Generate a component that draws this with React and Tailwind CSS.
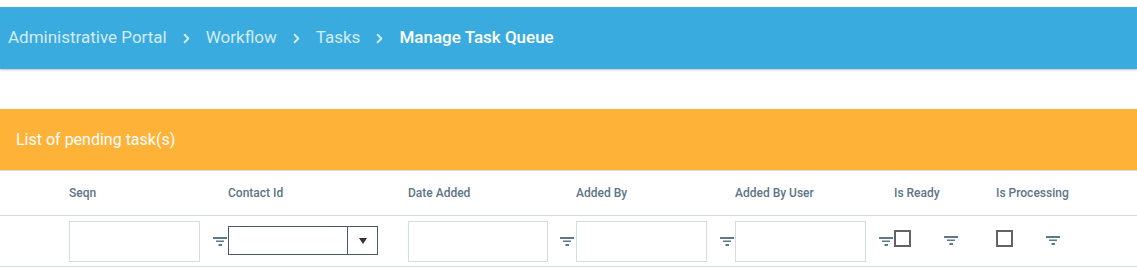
import { ChevronRight } from "lucide-react";

const cols = "grid grid-cols-[69px_159px_180px_168px_159px_159px_102px_1fr]";

function FilterIcon() {
  return (
    <svg width="15" height="9" viewBox="0 0 15 9" className="shrink-0">
      <rect x="0" y="0" width="14" height="2" fill="#5d7a89" />
      <rect x="3" y="3.5" width="8" height="1.5" fill="#5d7a89" />
      <rect x="5.5" y="7" width="3.5" height="2" fill="#5d7a89" />
    </svg>
  );
}

function TextBox({ w }) {
  return <input className={`h-[41px] ${w} border border-[#d3dce1] bg-white outline-none`} />;
}

function Check() {
  return <div className="w-[17px] h-[17px] border-2 border-[#636363] bg-white" />;
}

export default function App() {
  const crumbs = ["Administrative Portal", "Workflow", "Tasks"];
  const heads = ["Seqn", "Contact Id", "Date Added", "Added By", "Added By User", "Is Ready", "Is Processing"];

  return (
    <div className="w-[1137px] h-[268px] bg-white font-['Roboto',sans-serif] overflow-hidden">
      <div className="pt-[7px]">
        <div className="h-[62px] bg-[#3aabdf] flex items-center pl-2 shadow-[0_1px_2px_rgba(0,0,0,0.25)]">
          {crumbs.map((c) => (
            <div key={c} className="flex items-center">
              <span className="text-[17px] text-[#d2ecf8]">{c}</span>
              <ChevronRight size={15} strokeWidth={3} className="mx-[12px] text-[#d2ecf8]" />
            </div>
          ))}
          <span className="text-[17px] text-white font-medium">Manage Task Queue</span>
        </div>
      </div>

      <div className="mt-[40px] h-[61px] bg-[#ffb238] flex items-center pl-4">
        <span className="text-[16px] text-white">List of pending task(s)</span>
      </div>

      <div className={`${cols} h-[46px] items-center border-t border-b border-[#d3dce1] text-[12px] font-medium text-[#5b7685]`}>
        <div />
        {heads.map((h) => (
          <div key={h}>{h}</div>
        ))}
      </div>

      <div className={`${cols} h-[51px] items-center border-b border-[#d3dce1]`}>
        <div />
        <div className="flex items-center gap-[13px]">
          <TextBox w="w-[131px]" />
          <FilterIcon />
        </div>
        <div className="flex items-center">
          <div className="w-[150px] h-[29px] border border-[#4b5b63] flex -mt-px">
            <div className="flex-1 border-r border-[#4b5b63]" />
            <div className="w-[29px] flex items-center justify-center">
              <svg width="8" height="6" viewBox="0 0 8 6">
                <path d="M0 0h8L4 6z" fill="#333" />
              </svg>
            </div>
          </div>
        </div>
        <div className="flex items-center gap-[12px]">
          <TextBox w="w-[140px]" />
          <FilterIcon />
        </div>
        <div className="flex items-center gap-[13px]">
          <TextBox w="w-[131px]" />
          <FilterIcon />
        </div>
        <div className="flex items-center gap-[13px]">
          <TextBox w="w-[131px]" />
          <FilterIcon />
        </div>
        <div className="flex items-center gap-[33px] -mt-[5px]">
          <Check />
          <div className="mt-[3px] flex"><FilterIcon /></div>
        </div>
        <div className="flex items-center gap-[33px] -mt-[5px]">
          <Check />
          <div className="mt-[3px] flex"><FilterIcon /></div>
        </div>
      </div>
    </div>
  );
}
